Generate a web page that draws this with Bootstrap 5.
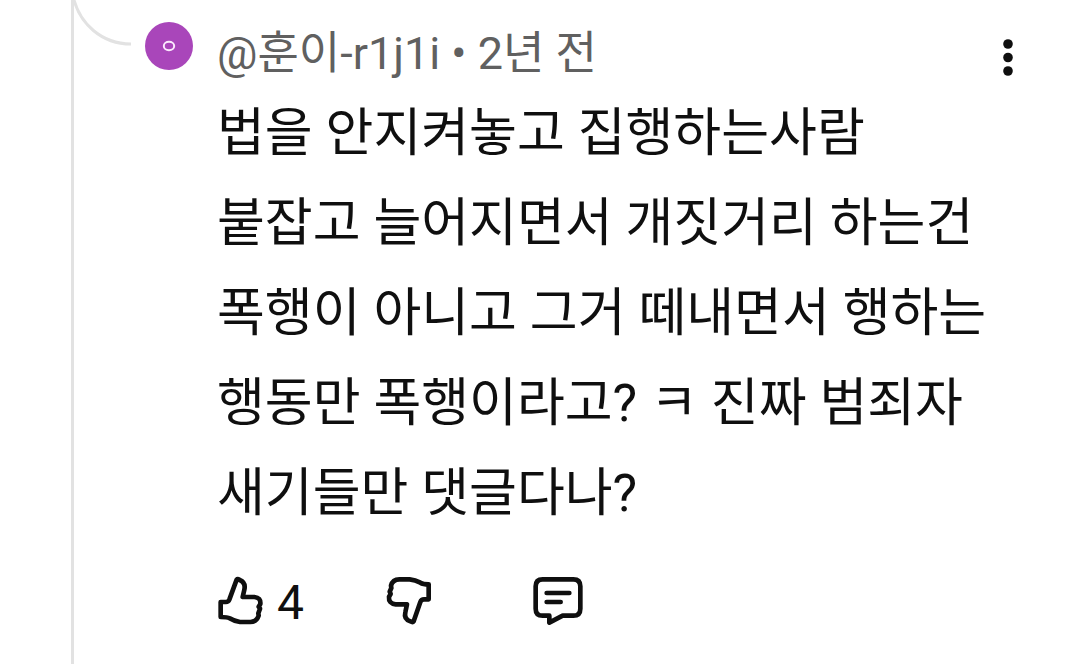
<!DOCTYPE html>
<html lang="ko">
<head>
<meta charset="utf-8">
<meta name="viewport" content="width=device-width, initial-scale=1">
<title>댓글</title>
<link href="https://cdn.jsdelivr.net/npm/bootstrap@5.3.0/dist/css/bootstrap.min.css" rel="stylesheet">
<style>
  body { font-family: Roboto, "Noto Sans CJK KR", sans-serif; color: #0f0f0f; background: #fff; }
  .rail { width: 74px; border-right: 3px solid #e2e2e2; }
  .avatar { width: 48px; height: 48px; margin: 22px 24px 0 14px; background: #a946ba; }
  .thread-body { padding: 19px 56px 16px 0; }
  .meta { font-size: 45px; line-height: 70px; color: #606060; }
  .meta a { color: inherit; }
  .comment-text { font-size: 52px; line-height: 90px; padding-right: 24px; word-break: keep-all; }
  .icon-btn { color: #0f0f0f; line-height: 56px; font-size: 48px; }
  .more { margin-right: 8px; margin-top: 8px; }
  .actions { margin-top: 34px; }
  .count { padding: 4px 0 0 12px; line-height: 52px; }
  .dislike { margin-left: 81px; }
  .reply { margin-left: 99px; }
  svg { display: block; flex: none; }
  .stroke { fill: none; stroke: currentColor; stroke-width: 14; stroke-linejoin: round; stroke-linecap: round; }
</style>
</head>
<body>
<main class="d-flex align-items-stretch min-vh-100">
  <div class="rail flex-shrink-0"></div>
  <svg width="57" height="48" viewBox="0 0 57 48" aria-hidden="true"><path d="M-1-4C5 24 28 44 57 44" fill="none" stroke="#e2e2e2" stroke-width="3"/></svg>
  <div class="avatar rounded-circle flex-shrink-0 d-flex align-items-center justify-content-center">
    <svg width="14" height="12" viewBox="0 0 14 12" role="img" aria-label="ㅇ"><ellipse cx="7" cy="6" rx="5.2" ry="4.2" fill="none" stroke="#fbeafd" stroke-width="2"/></svg>
  </div>
  <article class="thread-body flex-grow-1">
    <header class="d-flex justify-content-between align-items-center">
      <div class="meta"><a href="#" class="text-decoration-none">@훈이-r1j1i</a> • <time>2년 전</time></div>
      <button type="button" class="btn icon-btn more p-0 border-0" aria-label="더보기">
        <svg width="16" height="40" viewBox="0 0 16 40" fill="currentColor"><circle cx="8" cy="6" r="4.8"/><circle cx="8" cy="19.5" r="4.8"/><circle cx="8" cy="33" r="4.8"/></svg>
      </button>
    </header>
    <p class="comment-text mb-0">법을 안지켜놓고 집행하는사람 붙잡고 늘어지면서 개짓거리 하는건 폭행이 아니고 그거 떼내면서 행하는 행동만 폭행이라고? ㅋ 진짜 범죄자 새기들만 댓글다나?</p>
    <div class="actions d-flex align-items-center">
      <button type="button" class="btn icon-btn p-0 border-0 d-flex align-items-center" aria-label="좋아요 4">
        <svg width="48" height="52" viewBox="36 40 144 156"><path class="stroke" d="M47 121H63Q70 121 73 114L95 54Q98 51 104 55Q123 63 118 84L113 106H148Q168 108 166 127L161 135L165 141L160 155L161 162Q155 181 136 181H105Q88 179 74 170Q67 166 47 166Z"/></svg>
        <span class="count">4</span>
      </button>
      <button type="button" class="btn icon-btn dislike p-0 border-0" aria-label="싫어요">
        <svg width="48" height="52" viewBox="48 45 144 156"><path class="stroke" d="M179 73V118H165Q157 118 154 126L134 184Q131 188 124 184Q104 177 109 157L114 133H80Q58 131 60 110L65 102L62 95L67 84L66 77Q71 58 91 58H122Q139 60 154 68Q162 73 179 73Z"/></svg>
      </button>
      <button type="button" class="btn icon-btn reply p-0 border-0" aria-label="답글">
        <svg width="52" height="52" viewBox="39 45 156 156"><path class="stroke" d="M71 58H163Q184 58 184 79V146Q184 167 163 167H131L91 188V167H71Q50 167 50 146V79Q50 58 71 58ZM83 99H151M83 126H125"/></svg>
      </button>
    </div>
  </article>
</main>
<script src="https://cdn.jsdelivr.net/npm/bootstrap@5.3.0/dist/js/bootstrap.bundle.min.js"></script>
</body>
</html>
